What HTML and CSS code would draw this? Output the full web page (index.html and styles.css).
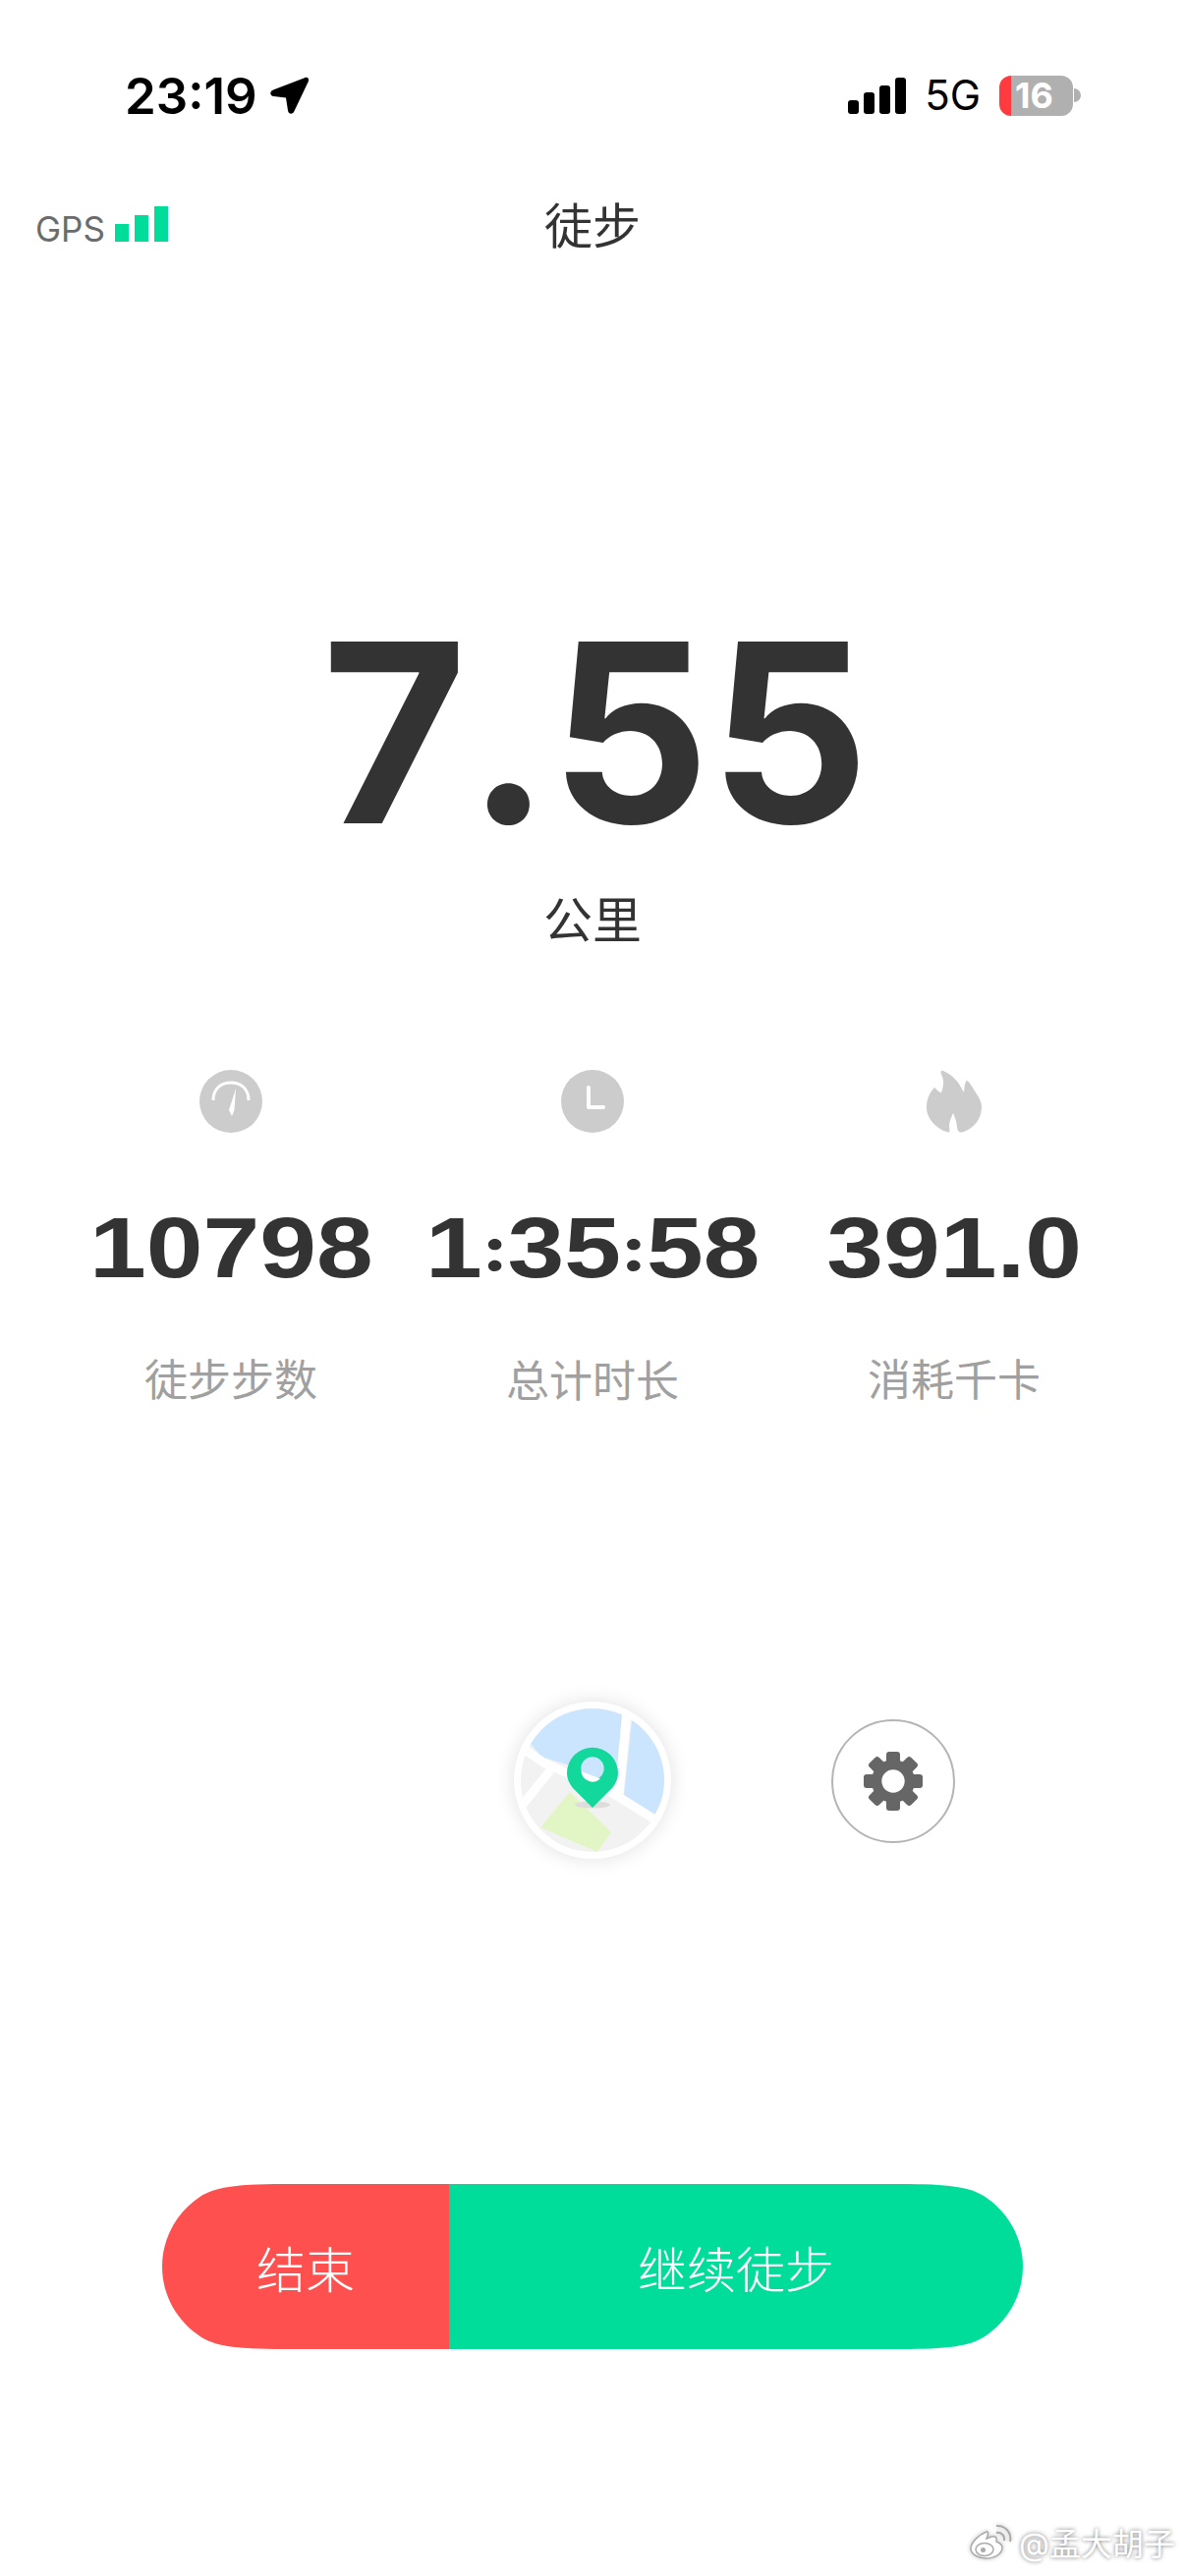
FILE: index.html
```html
<!DOCTYPE html>
<html lang="zh-CN">
  <head>
    <meta charset="UTF-8" />
    <title>徒步</title>
    <link rel="stylesheet" href="styles.css">
  </head>
  <body>
    <div class="phone">
      <div class="status-bar">
        <div class="status-left">
          <span class="status-time">23:19</span>
          <svg class="status-arrow" width="40" height="38" viewBox="0 0 40 38">
            <path d="M35 1.200 L3 13.500 C-0.800 15 -0.500 19.500 3.500 20 L16 21.500 L18 34.500 C18.800 38.500 23 38.800 24.500 35 L38.800 5 C40 2 38 0 35 1.200 Z" fill="#000" />
          </svg>
        </div>
        <div class="status-right">
          <div class="cell-bars">
            <span class="cell-bar cell-bar-1"></span>
            <span class="cell-bar cell-bar-2"></span>
            <span class="cell-bar cell-bar-3"></span>
            <span class="cell-bar cell-bar-4"></span>
          </div>
          <span class="status-net">5G</span>
          <div class="battery">
            <div class="battery-body">16</div>
            <span class="battery-tip"></span>
          </div>
        </div>
      </div>

      <header class="top-bar">
        <div class="gps">
          <span class="gps-text">GPS</span>
          <div class="gps-bars">
            <span class="gps-bar gps-bar-1"></span>
            <span class="gps-bar gps-bar-2"></span>
            <span class="gps-bar gps-bar-3"></span>
          </div>
        </div>
        <h1 class="top-title">徒步</h1>
      </header>

      <section class="distance">
        <div class="distance-value">7.55</div>
        <div class="distance-unit">公里</div>
      </section>

      <section class="stats">
        <div class="stat">
          <svg class="stat-icon" width="64" height="64" viewBox="0 0 64 64">
            <circle cx="32" cy="32" r="32" fill="#ccc" />
            <path d="M14 31 C14 19 22 13 32 13 C42 13 50 19 50 31" fill="none" stroke="#fff" stroke-width="3" />
            <path d="M37 19 L30 41 L33 47 L35.500 41 Z" fill="#fff" />
          </svg>
          <div class="stat-value">10798</div>
          <div class="stat-label">徒步步数</div>
        </div>
        <div class="stat">
          <svg class="stat-icon" width="64" height="64" viewBox="0 0 64 64">
            <circle cx="32" cy="32" r="32" fill="#ccc" />
            <path d="M28 18 V38 H43" fill="none" stroke="#fff" stroke-width="4" stroke-linecap="round" stroke-linejoin="round" />
          </svg>
          <div class="stat-value">1<span class="stat-colon">:</span>35<span class="stat-colon">:</span>58</div>
          <div class="stat-label">总计时长</div>
        </div>
        <div class="stat">
          <svg class="stat-icon" width="56" height="64" viewBox="0 0 56 64">
            <path d="M16 0.500 C24 4 31 10 34 16 L38 23 C38.500 17 39 12 41 11 C43 11 46 17 50 23 C54 29 56 33 56 38 C56 50 48 60 36 63.500 C33 64 31.500 62 31 58 C30.500 52 28.500 48 27 44 C25.500 48 23 52 23 57 C23.500 61 24 64 22 63.500 C10 60 0 50 0 38 C0 30 3 23 8 18 C10 19 12 23 15 23 C17 18 18 12 16 7 C14 3 14 1 16 0.500 Z" fill="#ccc" />
          </svg>
          <div class="stat-value">391.0</div>
          <div class="stat-label">消耗千卡</div>
        </div>
      </section>

      <section class="tools">
        <div class="map-btn">
          <svg width="146" height="146" viewBox="7 7 146 146">
            <defs>
              <clipPath id="map-clip"><circle cx="80" cy="80" r="73" /></clipPath>
            </defs>
            <g clip-path="url(#map-clip)">
              <rect x="0" y="0" width="160" height="160" fill="#f2f2f2" />
              <path d="M17 43 L28 56 L105 80 L110 13 L77 -2 L17 10 Z" fill="#cce5ff" />
              <path d="M120 20 L112 95 L143 115 L163 78 L143 18 Z" fill="#cce5ff" />
              <path d="M57 92 L99 133 L85 153 L27 128 Z" fill="#e2f5c4" />
              <path d="M10 48 L30 62 L100 93 L150 124" fill="none" stroke="#fff" stroke-width="9" />
              <path d="M115 10 L107 93" fill="none" stroke="#fff" stroke-width="9" />
              <path d="M37 70 L8 106" fill="none" stroke="#fff" stroke-width="9" />
            </g>
            <ellipse cx="80" cy="105" rx="18" ry="3.500" fill="#ddd" />
            <path d="M80 108 L60 88 C56 83 54 78 54 72.700 A26 26 0 0 1 106 72.700 C106 78 104 83 100 88 Z" fill="#12d89c" />
            <circle cx="80" cy="68" r="11.700" fill="#cce5ff" />
            <path d="M68.500 71 L88 78.500 A11.700 11.700 0 0 1 68.500 71 Z" fill="#fff" />
          </svg>
        </div>
        <div class="settings-btn">
          <svg width="60" height="60" viewBox="0 0 60 60">
            <g fill="#666">
              <rect x="23" y="0" width="14" height="14" rx="3" />
              <rect x="23" y="0" width="14" height="14" rx="3" transform="rotate(45 30 30)" />
              <rect x="23" y="0" width="14" height="14" rx="3" transform="rotate(90 30 30)" />
              <rect x="23" y="0" width="14" height="14" rx="3" transform="rotate(135 30 30)" />
              <rect x="23" y="0" width="14" height="14" rx="3" transform="rotate(180 30 30)" />
              <rect x="23" y="0" width="14" height="14" rx="3" transform="rotate(225 30 30)" />
              <rect x="23" y="0" width="14" height="14" rx="3" transform="rotate(270 30 30)" />
              <rect x="23" y="0" width="14" height="14" rx="3" transform="rotate(315 30 30)" />
              <circle cx="30" cy="30" r="22" />
            </g>
            <circle cx="30" cy="30" r="11.700" fill="#fff" />
          </svg>
        </div>
      </section>

      <section class="actions">
        <button class="action-btn action-end">结束</button>
        <button class="action-btn action-continue">继续徒步</button>
      </section>

      <div class="watermark">
        <svg class="watermark-logo" width="44" height="36" viewBox="0 0 44 36">
          <path d="M17 8 C9 11 1 19 1 25 C1 31 9 35 17 35 C26 35 33 30 33 24 C33 20 29 19 27 18 C28 14 26 12 22 13 L17 15 C19 10 19 7 17 8 Z" fill="#fff" stroke="#aaa" stroke-width="1.500" />
          <ellipse cx="15" cy="26" rx="9" ry="6.500" fill="none" stroke="#aaa" stroke-width="1.500" />
          <circle cx="13.500" cy="26.500" r="2.500" fill="#aaa" />
          <path d="M27 9 C32 8 36 12 35 17" fill="none" stroke="#aaa" stroke-width="2" />
          <path d="M27 2 C36 1 43 9 41 18" fill="none" stroke="#aaa" stroke-width="2" />
        </svg>
        <span class="watermark-text">@孟大胡子</span>
      </div>
    </div>
  </body>
</html>
```

FILE: styles.css
```css
* {
  box-sizing: border-box;
}

body {
  margin: 0;
  background-color: #fff;
}

.phone {
  position: relative;
  width: 1206px;
  height: 2622px;
  overflow: hidden;
  background-color: #fff;
  font-family: "Inter", "Noto Sans CJK SC", sans-serif;
  color: #333;
}

.status-bar {
  display: flex;
  justify-content: space-between;
  align-items: center;
  height: 194px;
  padding-left: 127px;
  padding-right: 106px;
}

.status-left {
  display: flex;
  align-items: center;
  gap: 13px;
}

.status-time {
  font-size: 51px;
  font-weight: 600;
  color: #000;
  line-height: 1;
}

.status-right {
  display: flex;
  align-items: center;
}

.cell-bars {
  display: flex;
  align-items: flex-end;
  gap: 5px;
  height: 37px;
}

.cell-bar {
  width: 11px;
  border-radius: 3px;
  background-color: #000;
}

.cell-bar-1 { height: 14px; }
.cell-bar-2 { height: 22px; }
.cell-bar-3 { height: 29px; }
.cell-bar-4 { height: 37px; }

.status-net {
  margin-left: 19px;
  font-size: 42px;
  color: #000;
  line-height: 1;
}

.battery {
  display: flex;
  align-items: center;
  margin-left: 19px;
}

.battery-body {
  width: 75px;
  height: 41px;
  padding-right: 4px;
  border-radius: 12px;
  background: linear-gradient(90deg, #ff3b3f 12px, #b0b0b0 12px);
  color: #fff;
  font-size: 36px;
  font-weight: 700;
  line-height: 41px;
  text-align: center;
}

.battery-tip {
  width: 7px;
  height: 14px;
  border-radius: 0 7px 7px 0;
  background-color: #b0b0b0;
  margin-left: 1px;
}

.top-bar {
  position: relative;
  display: flex;
  align-items: flex-start;
  justify-content: center;
  height: 68px;
}

.top-title {
  margin: 3px 0 0;
  font-size: 49px;
  font-weight: 400;
  line-height: 68px;
  color: #333;
}

.gps {
  position: absolute;
  left: 36px;
  bottom: 16px;
  display: flex;
  align-items: flex-end;
  gap: 10px;
}

.gps-text {
  font-size: 35px;
  color: #6b6b6b;
  line-height: 25px;
}

.gps-bars {
  display: flex;
  align-items: flex-end;
  gap: 6px;
}

.gps-bar {
  width: 14px;
  background-color: #00dc9a;
}

.gps-bar-1 { height: 18px; }
.gps-bar-2 { height: 27px; }
.gps-bar-3 { height: 36px; }

.distance {
  display: flex;
  flex-direction: column;
  align-items: center;
  margin-top: 328px;
}

.distance-value {
  margin-left: 6px;
  font-size: 254px;
  font-weight: 700;
  font-kerning: none;
  line-height: 312px;
  color: #333;
}

.distance-unit {
  margin-top: 1px;
  font-size: 50px;
  line-height: 68px;
  color: #333;
}

.stats {
  display: grid;
  grid-template-columns: repeat(3, 368px);
  padding-left: 51px;
  margin-top: 118px;
}

.stat {
  display: flex;
  flex-direction: column;
  align-items: center;
}

.stat-icon {
  display: block;
}

.stat-value {
  margin-top: 67px;
  font-family: "Liberation Sans", sans-serif;
  font-size: 88px;
  font-weight: 700;
  line-height: 100px;
  color: #333;
  white-space: nowrap;
  transform: scaleX(1.18);
}

.stat-colon {
  font-family: "Inter", sans-serif;
  font-size: 62px;
  font-weight: 800;
  vertical-align: 7px;
}

.stat-label {
  margin-top: 55px;
  font-size: 44px;
  font-weight: 400;
  line-height: 60px;
  color: #a0a0a0;
}

.tools {
  display: flex;
  align-items: center;
  height: 160px;
  margin-top: 296px;
  padding-left: 523px;
}

.map-btn {
  display: flex;
  align-items: center;
  justify-content: center;
  width: 160px;
  height: 160px;
  border-radius: 50%;
  background-color: #fff;
  box-shadow: 0 0 20px rgba(0, 0, 0, 0.12);
}

.settings-btn {
  display: flex;
  align-items: center;
  justify-content: center;
  width: 126px;
  height: 126px;
  margin-left: 163px;
  margin-top: 2px;
  border: 2px solid #b5b5b5;
  border-radius: 50%;
}

.actions {
  display: flex;
  width: 876px;
  height: 168px;
  margin-top: 331px;
  margin-left: 165px;
  clip-path: path("M125 0 C75 0 55 3 40 12 C15 28 0 55 0 84 C0 113 15 140 40 156 C55 165 75 168 125 168 H751 C801 168 821 165 836 156 C861 140 876 113 876 84 C876 55 861 28 836 12 C821 3 801 0 751 0 Z");
}

.action-btn {
  height: 168px;
  padding: 0;
  border: none;
  color: #fff;
  font-family: inherit;
  font-size: 50px;
  font-weight: 300;
}

.action-end {
  width: 292px;
  background-color: #ff5050;
}

.action-continue {
  flex: 1;
  background-color: #00dc9a;
}

.watermark {
  position: absolute;
  right: 10px;
  bottom: 12px;
  display: flex;
  align-items: center;
  gap: 6px;
}

.watermark-logo {
  filter: drop-shadow(0 0 2px rgba(0, 0, 0, 0.25));
}

.watermark-text {
  font-size: 32px;
  color: #fff;
  text-shadow: 0 0 4px rgba(0, 0, 0, 0.55);
}
```
